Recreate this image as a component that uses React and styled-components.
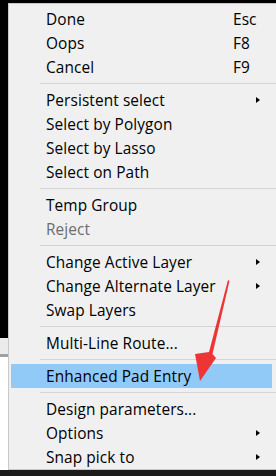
import styled, { createGlobalStyle } from "styled-components";

const Global = createGlobalStyle`
  html, body {
    margin: 0;
    padding: 0;
    background: #000;
  }
  body {
    font-family: "Open Sans", "Noto Sans", sans-serif;
  }
`;

const Screen = styled.div`
  position: relative;
  width: 276px;
  height: 476px;
  overflow: hidden;
  background: #000;
  display: flex;
  flex-direction: column;
`;

const Row = styled.div`
  flex: 1;
  display: flex;
  padding-top: 3px;
`;

const LeftStrip = styled.div`
  width: 8px;
  margin-top: -3px;
  display: flex;
  flex-direction: column;
`;

const StripPart = styled.div`
  height: ${(p) => (p.h ? `${p.h}px` : "auto")};
  flex: ${(p) => (p.h ? "none" : 1)};
  background: ${(p) => p.bg};
`;

const BottomBar = styled.div`
  height: 6px;
  background: #1c1c1c;
`;

const Menu = styled.div`
  flex: 1;
  background: #f0f0f0;
  border: 1px solid #c8c8c8;
  border-right: none;
  padding: 3px 0 0 0;
  display: flex;
  flex-direction: column;
`;

const Item = styled.div`
  height: 24px;
  margin: 0 4px 0 2px;
  padding-left: 35px;
  display: flex;
  align-items: center;
  font-size: 15.4px;
  letter-spacing: 0.1px;
  color: ${(p) => (p.disabled ? "#6d6d6d" : "#000")};
  background: ${(p) => (p.active ? "#91c9f7" : "transparent")};
`;

const Label = styled.span`
  flex: 1;
  white-space: nowrap;
`;

const Shortcut = styled.span`
  width: 23px;
  white-space: nowrap;
`;

const Sub = styled.span`
  width: 16px;
  display: flex;
  align-items: center;
  visibility: ${(p) => (p.show ? "visible" : "hidden")};
  &::before {
    content: "";
    border-left: 4px solid #000;
    border-top: 3.5px solid transparent;
    border-bottom: 3.5px solid transparent;
  }
`;

const Separator = styled.div`
  height: 9px;
  margin-left: 31px;
  display: flex;
  align-items: center;
  &::before {
    content: "";
    flex: 1;
    height: 1px;
    background: #d4d4d4;
  }
`;

const Arrow = styled.svg`
  position: absolute;
  left: 0;
  top: 0;
  pointer-events: none;
`;

const groups = [
  [
    { label: "Done", key: "Esc" },
    { label: "Oops", key: "F8" },
    { label: "Cancel", key: "F9" },
  ],
  [
    { label: "Persistent select", sub: true },
    { label: "Select by Polygon" },
    { label: "Select by Lasso" },
    { label: "Select on Path" },
  ],
  [{ label: "Temp Group" }, { label: "Reject", disabled: true }],
  [
    { label: "Change Active Layer", sub: true },
    { label: "Change Alternate Layer", sub: true },
    { label: "Swap Layers" },
  ],
  [{ label: "Multi-Line Route..." }],
  [{ label: "Enhanced Pad Entry", active: true }],
  [
    { label: "Design parameters..." },
    { label: "Options", sub: true },
    { label: "Snap pick to", sub: true },
  ],
];

export default function App() {
  return (
    <Screen>
      <Global />
      <Row>
        <LeftStrip>
          <StripPart h={338} bg="#000" />
          <StripPart h={16} bg="#ebebeb" />
          <StripPart h={3} bg="#a0a0a0" />
          <StripPart bg="#fff" />
        </LeftStrip>
        <Menu>
          {groups.map((g, gi) => (
            <div key={gi}>
              {gi > 0 && <Separator />}
              {g.map((it) => (
                <Item key={it.label} disabled={it.disabled} active={it.active}>
                  <Label>{it.label}</Label>
                  <Shortcut>{it.key || ""}</Shortcut>
                  <Sub show={it.sub} />
                </Item>
              ))}
            </div>
          ))}
        </Menu>
      </Row>
      <BottomBar />
      <Arrow width="276" height="476" viewBox="0 0 276 476">
        <polygon
          points="228,280 229.5,281 212.5,354 216,358 200,381 195,354 209,352"
          fill="#ee3535"
        />
      </Arrow>
    </Screen>
  );
}
